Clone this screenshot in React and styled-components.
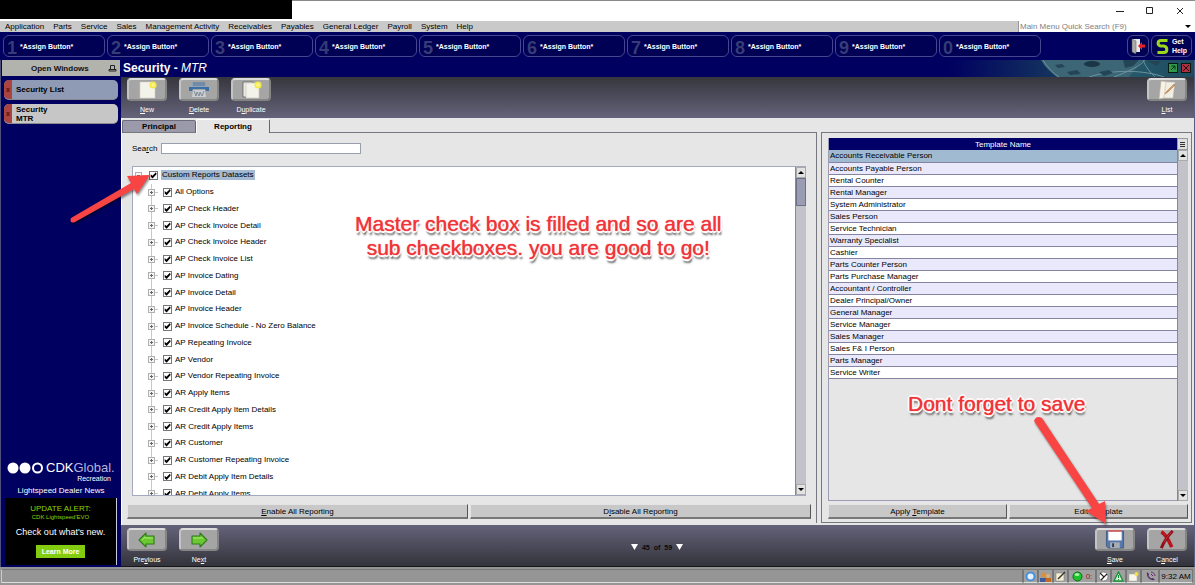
import React from 'react'
import styled, { createGlobalStyle } from 'styled-components'

const GlobalStyle = createGlobalStyle`
  * {
    box-sizing: border-box;
  }
  body {
    margin: 0;
    font-family: "Liberation Sans", Arial, sans-serif;
    font-size: 8px;
    color: #000;
  }
  button, input, select {
    font: inherit;
    color: inherit;
    padding: 0;
    margin: 0;
  }
  button {
    cursor: pointer;
  }
`

const Window = styled.div`
  position: relative;
  height: 100vh;
  display: flex;
  flex-direction: column;
  overflow: hidden;
  background: #000060;
`

const TitleBar = styled.header`
  height: 21px;
  flex: none;
  display: flex;
  justify-content: flex-end;
  background: #fff;
  border-top: 1px solid #8a8a8a;
  .redacted {
    width: 292px;
    height: 19px;
    margin: -1px auto 0 0;
    background: #000;
  }
  button {
    width: 30px;
    border: none;
    background: none;
    display: flex;
    align-items: center;
    justify-content: center;
  }
`

const MenuBar = styled.nav`
  height: 11px;
  flex: none;
  display: flex;
  align-items: stretch;
  gap: 9px;
  padding-left: 5px;
  background: #c9c9c9;
  line-height: 11px;
  button {
    border: none;
    background: none;
    white-space: nowrap;
  }
`

const QuickSearch = styled.label`
  position: relative;
  width: 177px;
  margin-left: auto;
  background: #fff;
  border-left: 1px solid #999;
  select {
    appearance: none;
    display: block;
    width: 100%;
    height: 11px;
    padding-left: 1px;
    border: none;
    background: transparent;
    color: #808080;
    line-height: 11px;
  }
  svg {
    position: absolute;
    right: 4px;
    top: 4px;
  }
`

const ShortcutBar = styled.div`
  height: 28px;
  flex: none;
  display: flex;
  align-items: center;
  gap: 2px;
  padding: 0 3px;
  background: #000060;
`

const Shortcut = styled.button`
  flex: 0 1 ${({ $width }) => $width || 102}px;
  height: 22px;
  display: flex;
  align-items: center;
  justify-content: ${({ $width }) => ($width ? 'center' : 'flex-start')};
  gap: 3px;
  padding-left: ${({ $width }) => ($width ? 0 : 3)}px;
  border: 1px solid #46468e;
  border-radius: 6px;
  background: #000054;
  color: #fff;
  font-size: 7px;
  font-weight: bold;
  line-height: 9px;
  white-space: nowrap;
  text-align: left;
  margin-left: ${({ $push }) => ($push ? 'auto' : 0)};
  b {
    color: #353c78;
    font-size: 18px;
    line-height: 22px;
    padding-top: 3px;
  }
`

const Body = styled.div`
  flex: 1;
  min-height: 0;
  display: flex;
`

const Sidebar = styled.aside`
  width: 121px;
  flex: none;
  display: flex;
  flex-direction: column;
  padding: 0 1px;
  background: #000060;
  color: #fff;
  border-left: 1px solid #50507c;
  h2 {
    height: 16px;
    margin: 0 0 4px;
    padding: 0 3px 0 29px;
    display: flex;
    align-items: center;
    justify-content: space-between;
    background: #b3b3ae;
    color: #111;
    font-size: 8px;
  }
`

const OpenWindow = styled.div`
  height: 20px;
  margin: 0 2px 4px;
  display: flex;
  overflow: hidden;
  border-radius: 5px;
  border-bottom: 1px solid #8a8a90;
  background: ${({ $active }) => ($active ? '#c6c6c6' : '#8f9bb5')};
  color: #000;
  font-weight: bold;
  .close {
    width: 8px;
    border: none;
    background: #a94440;
    color: #50100e;
    font-size: 7px;
    font-weight: bold;
  }
  .name {
    flex: 1;
    padding-left: 4px;
    border: none;
    background: none;
    text-align: left;
    line-height: 9px;
  }
`

const Logo = styled.div`
  margin-top: auto;
  padding: 0 5px;
  display: flex;
  align-items: center;
  gap: 2px;
  font-size: 13px;
  line-height: 14px;
  span {
    color: #b4b4da;
  }
`

const LogoSub = styled.div`
  padding-right: 9px;
  text-align: right;
  font-size: 7px;
  line-height: 8px;
`

const NewsTitle = styled.div`
  padding: 3px 0;
  text-align: center;
  line-height: 9px;
`

const News = styled.section`
  height: 67px;
  margin: 0 3px 2px;
  display: flex;
  flex-direction: column;
  align-items: center;
  padding-top: 6px;
  background: #000;
  border-right: 1px solid #c8c8d8;
  line-height: 10px;
  h3 {
    margin: 0;
    color: #8fd400;
    font-size: 8px;
    font-weight: normal;
  }
  small {
    color: #8fd400;
    font-size: 6px;
    line-height: 7px;
  }
  p {
    margin: 6px 0 7px;
    font-size: 9px;
    line-height: 11px;
  }
  a {
    padding: 1px 6px;
    background: #84cc10;
    color: #fff;
    font-size: 7px;
    font-weight: bold;
    text-decoration: none;
    line-height: 11px;
  }
`

const Main = styled.main`
  flex: 1;
  min-width: 0;
  display: flex;
  flex-direction: column;
  border-right: 1px solid #5c5c80;
`

const PageTitle = styled.div`
  height: 17px;
  flex: none;
  display: flex;
  justify-content: space-between;
  background: #000060;
  color: #fff;
  h1 {
    margin: 0;
    padding-left: 2px;
    font-size: 12px;
    line-height: 17px;
  }
  em {
    font-weight: normal;
  }
`

const Globe = styled.div`
  position: relative;
  display: flex;
  .controls {
    position: absolute;
    right: 3px;
    top: 3px;
    display: flex;
    gap: 3px;
  }
  button {
    width: 10px;
    height: 10px;
    display: flex;
    border: 1px solid #061a10;
    background: #2f9a4a;
  }
  button + button {
    background: #b03040;
  }
`

const Toolbar = styled.div`
  height: ${({ $bottom }) => ($bottom ? 42 : 41)}px;
  flex: none;
  display: flex;
  gap: 12px;
  padding: ${({ $bottom }) => ($bottom ? '3px 7px 0 6px' : '1px 7px 0 6px')};
  background: ${({ $bottom }) =>
    $bottom
      ? 'linear-gradient(#65637a, #33333b)'
      : 'linear-gradient(#36363d, #65637a)'};
  border-bottom: ${({ $bottom }) => ($bottom ? '1px solid #16161a' : 'none')};
`

const Tool = styled.button`
  width: 40px;
  flex: none;
  display: flex;
  flex-direction: column;
  align-items: center;
  border: none;
  background: none;
  color: #fff;
  font-size: 7px;
  line-height: 9px;
  margin-left: ${({ $push }) => ($push ? 'auto' : 0)};
  .face {
    width: 40px;
    height: 23px;
    margin-bottom: 4px;
    display: flex;
    align-items: center;
    justify-content: center;
    border: 2px solid;
    border-color: #dcdcdc #858585 #858585 #c4c4c4;
    border-radius: 4px;
    background: #a5a5a5;
  }
`

const Pager = styled.div`
  flex: 1;
  display: flex;
  align-items: center;
  justify-content: center;
  gap: 4px;
  color: #08080c;
  font-size: 7px;
  font-weight: bold;
`

const Content = styled.div`
  flex: 1;
  min-height: 0;
  display: grid;
  grid-template-columns: minmax(0, 695fr) minmax(0, 371fr);
  grid-template-rows: minmax(0, 1fr);
  gap: 4px;
  padding: 1px 2px 2px 0;
  background: #e6e6e6;
  border-left: 1px solid #fff;
`

const TabArea = styled.section`
  display: flex;
  flex-direction: column;
`

const Tabs = styled.div`
  height: 13px;
  flex: none;
  display: flex;
  align-items: flex-end;
`

const Tab = styled.button`
  width: 74px;
  height: ${({ $active }) => ($active ? 14 : 12)}px;
  margin-bottom: ${({ $active }) => ($active ? -1 : 0)}px;
  position: relative;
  border: 1px solid ${({ $active }) => ($active ? '#fff' : '#6c6c7c')};
  border-right-color: #66666e;
  border-bottom: none;
  border-radius: 2px 2px 0 0;
  background: ${({ $active }) => ($active ? '#e6e6e6' : '#9a9aab')};
  font-weight: bold;
  line-height: 11px;
`

const TabPanel = styled.div`
  flex: 1;
  min-height: 0;
  display: flex;
  flex-direction: column;
  padding: 10px 5px 4px;
  border-top: 1px solid #77777f;
  border-right: 1px solid #77777f;
`

const SearchField = styled.label`
  height: 11px;
  margin-bottom: 12px;
  padding-left: 5px;
  display: flex;
  align-items: center;
  gap: 4px;
  input {
    width: 200px;
    height: 11px;
    padding: 0 2px;
    border: 1px solid #9a9fb0;
    background: #fff;
    outline: none;
  }
`

const TreeBox = styled.div`
  flex: 1;
  min-height: 0;
  margin: 0 5px 8px;
  display: flex;
  border: 1px solid #a4a8bc;
  border-right: none;
`

const TreeView = styled.div`
  flex: 1;
  display: flex;
  flex-direction: column;
  overflow: hidden;
  background: #fff;
`

const Tree = styled.ul`
  flex: none;
  height: calc(100% + 7px);
  margin: 0;
  padding: 0;
  display: grid;
  grid-auto-rows: 1fr;
  list-style: none;
`

const Node = styled.li`
  display: flex;
  align-items: center;
  padding-left: ${({ $root }) => ($root ? 2 : 15)}px;
  background: ${({ $root }) =>
    $root ? 'none' : 'linear-gradient(#c8c8c8, #c8c8c8) 18px 0 / 1px 100% no-repeat'};
  .toggle {
    width: 7px;
    height: 7px;
    display: flex;
    border: 1px solid #b0b0b0;
    background: #f4f4f4;
  }
  .branch {
    width: ${({ $root }) => ($root ? 7 : 3)}px;
    margin-right: ${({ $root }) => ($root ? 0 : 5)}px;
    border-top: 1px solid #c8c8c8;
  }
  label {
    display: flex;
    align-items: center;
    gap: ${({ $root }) => ($root ? 3 : 2)}px;
    line-height: 10px;
    white-space: nowrap;
  }
  label span {
    padding: 0 1px;
    background: ${({ $root }) => ($root ? '#a3bad2' : 'none')};
  }
`

const CheckBox = styled.input`
  appearance: none;
  width: 9px;
  height: 9px;
  flex: none;
  display: grid;
  place-items: center;
  border: 1px solid #777;
  background: #fff;
  &:checked::before {
    content: "";
    width: 7px;
    height: 7px;
    background: #000;
    clip-path: polygon(10% 35%, 35% 55%, 85% 5%, 95% 30%, 38% 95%, 10% 70%);
  }
`

const ScrollBar = styled.div`
  width: 11px;
  flex: none;
  display: flex;
  flex-direction: column;
  background: #c2c2c8;
  border-left: 1px solid #888894;
  button {
    height: 11px;
    display: flex;
    align-items: center;
    justify-content: center;
    border: 1px solid #aaa;
    background: #e2e2e2;
  }
  button:last-child {
    margin-top: auto;
  }
  .thumb {
    height: 28px;
    background: #9a9cb2;
    border: 1px solid #6e7088;
  }
`

const ButtonRow = styled.div`
  height: 15px;
  flex: none;
  display: flex;
  gap: 2px;
`

const PushButton = styled.button`
  flex: 1;
  border: 1px solid;
  border-color: #e4e4e4 #555 #777 #e4e4e4;
  border-bottom-width: 2px;
  background: #c8c8c8;
`

const Templates = styled.section`
  display: flex;
  flex-direction: column;
  margin-top: 13px;
  padding: 5px 3px 3px 6px;
  border: 1px solid #77777f;
`

const TemplateList = styled.div`
  flex: 1;
  min-height: 0;
  display: flex;
  margin-bottom: 3px;
  .pane {
    flex: 1;
    border: 1px solid #9c9cb4;
    border-right: none;
    border-top: none;
  }
  .side {
    display: flex;
    flex-direction: column;
  }
  .side > button {
    height: 12px;
    display: flex;
    align-items: center;
    justify-content: center;
    border: 1px solid #999;
    background: #dedede;
  }
  .side > div {
    flex: 1;
  }
`

const Table = styled.table`
  width: 100%;
  border-collapse: collapse;
  line-height: 11px;
  th {
    height: 12px;
    padding: 0;
    background: #000068;
    color: #fff;
    font-weight: normal;
  }
  td {
    height: 12px;
    padding: 0 1px;
    background: #fff;
    border-bottom: 1px solid #8484a2;
  }
  tr:nth-child(even) td {
    background: #e9e9fb;
  }
  tbody tr:first-child td {
    background: #a0bad2;
  }
`

const StatusBar = styled.footer`
  height: 18px;
  flex: none;
  display: flex;
  justify-content: flex-end;
  padding: 2px 2px 2px 1px;
  background: #959595;
  .message {
    flex: 1;
    border: 1px solid #777;
    border-bottom-color: #ddd;
    border-left-color: #ccc;
  }
`

const StatusCell = styled.div`
  width: ${({ $width }) => $width || 15}px;
  display: flex;
  align-items: center;
  justify-content: center;
  gap: 3px;
  border: 1px solid #777;
  border-bottom-color: #ddd;
  background: #a0a0a0;
  white-space: nowrap;
  .count {
    color: #a02020;
  }
`

const Note = styled.p`
  position: absolute;
  left: ${({ $x }) => $x}px;
  top: ${({ $y }) => $y}px;
  margin: 0;
  color: #f03439;
  font-size: 21px;
  line-height: 24px;
  text-align: center;
  white-space: nowrap;
  pointer-events: none;
  text-shadow: 0 0 1px #f03439, 2px 0 #fff, -2px 0 #fff, 0 2px #fff, 0 -2px #fff,
    1px 1px #fff, -1px -1px #fff, 1px -1px #fff, -1px 1px #fff, 1px 4px 2px #555;
`

const Arrow = styled.svg`
  position: absolute;
  left: ${({ $x }) => $x}px;
  top: ${({ $y }) => $y}px;
  pointer-events: none;
  filter: drop-shadow(1px 2px 1px rgba(0, 0, 0, 0.45));
`

const menus = ['Application', 'Parts', 'Service', 'Sales', 'Management Activity', 'Receivables', 'Payables', 'General Ledger', 'Payroll', 'System', 'Help']

const shortcuts = [1, 2, 3, 4, 5, 6, 7, 8, 9, 0]

const datasets = [
  'All Options',
  'AP Check Header',
  'AP Check Invoice Detail',
  'AP Check Invoice Header',
  'AP Check Invoice List',
  'AP Invoice Dating',
  'AP Invoice Detail',
  'AP Invoice Header',
  'AP Invoice Schedule - No Zero Balance',
  'AP Repeating Invoice',
  'AP Vendor',
  'AP Vendor Repeating Invoice',
  'AR Apply Items',
  'AR Credit Apply Item Details',
  'AR Credit Apply Items',
  'AR Customer',
  'AR Customer Repeating Invoice',
  'AR Debit Apply Item Details',
  'AR Debit Apply Items',
]

const templates = [
  'Accounts Receivable Person',
  'Accounts Payable Person',
  'Rental Counter',
  'Rental Manager',
  'System Administrator',
  'Sales Person',
  'Service Technician',
  'Warranty Specialist',
  'Cashier',
  'Parts Counter Person',
  'Parts Purchase Manager',
  'Accountant / Controller',
  'Dealer Principal/Owner',
  'General Manager',
  'Service Manager',
  'Sales Manager',
  'Sales F& I Person',
  'Parts Manager',
  'Service Writer',
]

const Triangle = ({ up, color = '#000', size = 6 }) => (
  <svg width={size} height={size === 6 ? 3 : 6} viewBox="0 0 6 3" preserveAspectRatio="none">
    <path d={up ? 'M0 3L3 0L6 3Z' : 'M0 0H6L3 3Z'} fill={color} />
  </svg>
)

const Sparkle = ({ x }) => (
  <g>
    <circle cx={x} cy="4" r="3.6" fill="#f4e84a" />
    <circle cx={x} cy="4" r="1.8" fill="#fdf78c" />
  </g>
)

const NewIcon = () => (
  <svg width="20" height="18" viewBox="0 0 20 18">
    <path d="M3 1H15L18 4V17H3Z" fill="#f4f3ea" stroke="#d0cfc6" strokeWidth=".6" />
    <Sparkle x={16} />
  </svg>
)

const DuplicateIcon = () => (
  <svg width="22" height="18" viewBox="0 0 22 18">
    <path d="M3 1H13V16H3Z" fill="#eceadf" stroke="#555" strokeWidth=".7" />
    <path d="M6 2H19V17H6Z" fill="#f4f3ea" stroke="#c4c3ba" strokeWidth=".6" />
    <Sparkle x={18} />
  </svg>
)

const DeleteIcon = () => (
  <svg width="22" height="18" viewBox="0 0 22 18">
    <path d="M4 1H18V6H4Z" fill="#8ea4bc" />
    <path d="M5 2H17M5 4H17" stroke="#496785" strokeWidth=".8" />
    <path d="M1 6H21V10H18L17 8H5L4 10H1Z" fill="#3d6ea6" />
    <path d="M5 9H17L18 16H4Z" fill="#c9ced3" />
    <path d="M6 10L8 15L9 11L11 15L12 11L14 15L16 10" fill="none" stroke="#707b86" strokeWidth=".8" />
  </svg>
)

const ListIcon = () => (
  <svg width="20" height="20" viewBox="0 0 20 20">
    <path d="M4 1L12 2V17L2 19Z" fill="#f7f2e4" stroke="#b5ab94" strokeWidth=".5" />
    <path d="M9 2H18L16 18H7Z" fill="#f1eee6" stroke="#b9b3a5" strokeWidth=".5" />
    <path d="M17 4L9 12L8 14L11 12L18 5Z" fill="#dc9a58" stroke="#8b623a" strokeWidth=".4" />
  </svg>
)

const ArrowIcon = ({ left }) => (
  <svg width="18" height="16" viewBox="0 0 18 16">
    <path
      d={left ? 'M1 8L8 1V4H16V12H8V15Z' : 'M17 8L10 1V4H2V12H10V15Z'}
      fill="#6cc832"
      stroke="#2c7c18"
      strokeWidth="1.1"
      strokeLinejoin="round"
    />
    <path d={left ? 'M4 8L7 5V6H15' : 'M3 6H11V5L13 7'} fill="none" stroke="#a6ea70" />
  </svg>
)

const SaveIcon = () => (
  <svg width="20" height="19" viewBox="0 0 20 20">
    <path d="M1 1H19V19H3L1 17Z" fill="#5878ac" stroke="#34507c" strokeWidth=".8" />
    <path d="M3 1H17V11H3Z" fill="#fff" />
    <path d="M3 0H17V2H3Z" fill="#c86464" />
    <path d="M5 13H15V19H5Z" fill="#a7adb5" />
    <path d="M7 14H9V18H7Z" fill="#303a50" />
  </svg>
)

const CancelIcon = () => (
  <svg width="18" height="19" viewBox="0 0 18 20">
    <path d="M3 2C7 4 11 11 14 18" fill="none" stroke="#b8141c" strokeWidth="3.8" />
    <path d="M15 1C11 5 6 12 3 19" fill="none" stroke="#8c1018" strokeWidth="3.2" />
    <path d="M14 2C11 5 8 9 6 13" fill="none" stroke="#d83038" strokeWidth="1" />
  </svg>
)

const ExitIcon = () => (
  <svg width="15" height="16" viewBox="0 0 15 16">
    <path d="M1 1H9V14H1Z" fill="#e8e8e8" />
    <path d="M1 1L5 3V16L1 14Z" fill="#aaa" stroke="#555" strokeWidth=".5" />
    <path d="M7 8L11 4V6.500H14V9.500H11V12Z" fill="#e4202c" />
  </svg>
)

const HelpIcon = () => (
  <svg width="13" height="17" viewBox="0 0 13 17">
    <path
      d="M11.500 2.500H5C1.500 2.500 1 7 4.500 8H8C12 9 11.500 14.500 8 14.500H1.500"
      fill="none"
      stroke="#9ad71c"
      strokeWidth="3"
    />
  </svg>
)

const WorldArt = () => (
  <svg width="245" height="17" viewBox="0 0 245 17">
    <defs>
      <linearGradient id="sea" x1="0" x2="1">
        <stop offset="0" stopColor="#000060" />
        <stop offset=".4" stopColor="#12305e" />
        <stop offset=".75" stopColor="#25586a" />
        <stop offset="1" stopColor="#1d4a60" />
      </linearGradient>
    </defs>
    <rect width="245" height="17" fill="url(#sea)" />
    <path d="M92 0C96 7 101 12 108 17H180L194 0Z" fill="#3c6676" />
    <path d="M94 0C98 7 104 13 110 17M165 17C180 11 192 6 196 0M194 0C197 8 202 13 206 17M140 17C165 9 195 10 215 17" fill="none" stroke="#6c93a0" />
    <ellipse cx="143" cy="4" rx="8" ry="3" fill="#1b3546" />
    <path d="M106 5L113 4L116 7L109 8ZM118 12L128 10L132 14L121 15ZM150 12L160 10L164 13L155 16ZM174 0H190L184 6L176 8ZM198 1H212L208 6Z" fill="#244556" />
  </svg>
)

const App = () => {
  return (
    <Window>
      <GlobalStyle />
      <TitleBar>
        <div className="redacted" />
        <button aria-label="Minimize">
          <svg width="8" height="8"><path d="M0 4.500H8" stroke="#222" /></svg>
        </button>
        <button aria-label="Maximize">
          <svg width="8" height="8"><path d="M.5.500H6.500V6.500H.5Z" fill="none" stroke="#222" /></svg>
        </button>
        <button aria-label="Close">
          <svg width="8" height="8"><path d="M1 1L7 7M7 1L1 7" stroke="#222" /></svg>
        </button>
      </TitleBar>
      <MenuBar>
        {menus.map((menu) => <button key={menu}>{menu}</button>)}
        <QuickSearch>
          <select aria-label="Main Menu Quick Search">
            <option>Main Menu Quick Search (F9)</option>
          </select>
          <Triangle />
        </QuickSearch>
      </MenuBar>
      <ShortcutBar>
        {shortcuts.map((n) => (
          <Shortcut key={n}><b>{n}</b>*Assign Button*</Shortcut>
        ))}
        <Shortcut $width={22} $push aria-label="Exit"><ExitIcon /></Shortcut>
        <Shortcut $width={41}><HelpIcon /><span>Get<br />Help</span></Shortcut>
      </ShortcutBar>

      <Body>
        <Sidebar>
          <h2>
            Open Windows
            <svg width="9" height="8" viewBox="0 0 9 8">
              <path d="M2.500 5V1.500H6.500V5M1 5.500H8V7H1Z" fill="none" stroke="#222" />
            </svg>
          </h2>
          <OpenWindow>
            <button className="close">x</button>
            <button className="name">Security List</button>
          </OpenWindow>
          <OpenWindow $active>
            <button className="close">x</button>
            <button className="name">Security<br />MTR</button>
          </OpenWindow>
          <Logo>
            <svg width="37" height="12" viewBox="0 0 37 12">
              <circle cx="6" cy="6" r="5.500" fill="#fff" />
              <circle cx="18" cy="6" r="5.500" fill="#fff" />
              <circle cx="30.500" cy="6" r="4.500" fill="none" stroke="#fff" strokeWidth="2" />
            </svg>
            <div>CDK<span>Global.</span></div>
          </Logo>
          <LogoSub>Recreation</LogoSub>
          <NewsTitle>Lightspeed Dealer News</NewsTitle>
          <News>
            <h3>UPDATE ALERT:</h3>
            <small>CDK Lightspeed'EVO</small>
            <p>Check out what's new.</p>
            <a href="#news">Learn More</a>
          </News>
        </Sidebar>

        <Main>
          <PageTitle>
            <h1>Security - <em>MTR</em></h1>
            <Globe>
              <WorldArt />
              <div className="controls">
                <button aria-label="Restore">
                  <svg width="8" height="8"><path d="M2 6L6 2M2.500 2H6V5.500" stroke="#0b2c14" fill="none" /></svg>
                </button>
                <button aria-label="Close page">
                  <svg width="8" height="8"><path d="M1 1L7 7M7 1L1 7" stroke="#2c060c" /></svg>
                </button>
              </div>
            </Globe>
          </PageTitle>
          <Toolbar>
            <Tool><span className="face"><NewIcon /></span><span><u>N</u>ew</span></Tool>
            <Tool><span className="face"><DeleteIcon /></span><span><u>D</u>elete</span></Tool>
            <Tool><span className="face"><DuplicateIcon /></span><span>D<u>u</u>plicate</span></Tool>
            <Tool $push><span className="face"><ListIcon /></span><span><u>L</u>ist</span></Tool>
          </Toolbar>

          <Content>
            <TabArea>
              <Tabs>
                <Tab>Principal</Tab>
                <Tab $active>Reporting</Tab>
              </Tabs>
              <TabPanel>
                <SearchField>
                  <span>Sea<u>r</u>ch</span>
                  <input type="text" />
                </SearchField>
                <TreeBox>
                  <TreeView>
                    <Tree>
                      <Node $root>
                        <span className="toggle">
                          <svg width="5" height="5"><path d="M1 2.500H4" stroke="#666" /></svg>
                        </span>
                        <span className="branch" />
                        <label><CheckBox type="checkbox" defaultChecked /><span>Custom Reports Datasets</span></label>
                      </Node>
                      {datasets.map((name) => (
                        <Node key={name}>
                          <span className="toggle">
                            <svg width="5" height="5"><path d="M1 2.500H4M2.500 1V4" stroke="#666" /></svg>
                          </span>
                          <span className="branch" />
                          <label><CheckBox type="checkbox" defaultChecked /><span>{name}</span></label>
                        </Node>
                      ))}
                    </Tree>
                  </TreeView>
                  <ScrollBar>
                    <button aria-label="Scroll up"><Triangle up /></button>
                    <div className="thumb" />
                    <button aria-label="Scroll down"><Triangle /></button>
                  </ScrollBar>
                </TreeBox>
                <ButtonRow>
                  <PushButton><u>E</u>nable All Reporting</PushButton>
                  <PushButton>D<u>i</u>sable All Reporting</PushButton>
                </ButtonRow>
              </TabPanel>
            </TabArea>

            <Templates>
              <TemplateList>
                <div className="pane">
                  <Table>
                    <thead>
                      <tr><th>Template Name</th></tr>
                    </thead>
                    <tbody>
                      {templates.map((name) => (
                        <tr key={name}><td>{name}</td></tr>
                      ))}
                    </tbody>
                  </Table>
                </div>
                <div className="side">
                  <button aria-label="Columns">
                    <svg width="5" height="5"><path d="M0 .5H5M0 2.500H5M0 4.500H5" stroke="#333" /></svg>
                  </button>
                  <ScrollBar>
                    <button aria-label="Scroll templates up"><Triangle up /></button>
                    <button aria-label="Scroll templates down"><Triangle /></button>
                  </ScrollBar>
                </div>
              </TemplateList>
              <ButtonRow>
                <PushButton>Apply <u>T</u>emplate</PushButton>
                <PushButton>Edit Te<u>m</u>plate</PushButton>
              </ButtonRow>
            </Templates>
          </Content>

          <Toolbar $bottom>
            <Tool><span className="face"><ArrowIcon left /></span><span>Pre<u>v</u>ious</span></Tool>
            <Tool><span className="face"><ArrowIcon /></span><span>Ne<u>x</u>t</span></Tool>
            <Pager>
              <Triangle color="#fff" size={7} />
              <span>45</span><span>of</span><span>59</span>
              <Triangle color="#fff" size={7} />
            </Pager>
            <Tool><span className="face"><SaveIcon /></span><span><u>S</u>ave</span></Tool>
            <Tool><span className="face"><CancelIcon /></span><span>C<u>a</u>ncel</span></Tool>
          </Toolbar>
        </Main>
      </Body>

      <StatusBar>
        <div className="message" />
        <StatusCell>
          <svg width="11" height="11"><circle cx="5.500" cy="5.500" r="4" fill="#e4f2ff" stroke="#4a90d8" strokeWidth="2" /></svg>
        </StatusCell>
        <StatusCell>
          <svg width="13" height="11">
            <circle cx="5" cy="4" r="2.500" fill="#d89040" /><path d="M1 11V7H8V11Z" fill="#3c5a9c" />
            <circle cx="9" cy="5" r="2" fill="#e0b070" /><path d="M6 11L7 7H12V11Z" fill="#c46a20" />
          </svg>
        </StatusCell>
        <StatusCell>
          <svg width="11" height="11"><path d="M1 2H9V10H1Z" fill="#f4efd4" stroke="#777" strokeWidth=".5" /><path d="M3 8L10 1" stroke="#3c3020" strokeWidth="1.500" /></svg>
        </StatusCell>
        <StatusCell $width={28}>
          <svg width="11" height="11"><circle cx="5.500" cy="5.500" r="4.500" fill="#1cc42c" stroke="#0c6c14" /><ellipse cx="5" cy="3.500" rx="2.500" ry="1.500" fill="#a4f4a4" /></svg>
          <span className="count">0:</span>
        </StatusCell>
        <StatusCell>
          <svg width="11" height="11"><circle cx="5.500" cy="5.500" r="4.500" fill="#fff" stroke="#888" /><path d="M2 2L6 6L9 3M6 6L3 9" fill="none" stroke="#222" strokeWidth="1.200" /></svg>
        </StatusCell>
        <StatusCell>
          <svg width="11" height="11"><path d="M5.500 1L10 10H1Z" fill="#d8f4d8" stroke="#149034" strokeWidth="1.300" /><path d="M5.500 4V7M5.500 8V9" stroke="#149034" /></svg>
        </StatusCell>
        <StatusCell>
          <svg width="11" height="11"><path d="M1 3H9V10H1Z" fill="#f8f6ea" stroke="#aaa" strokeWidth=".5" /><circle cx="8.500" cy="3" r="2" fill="#f0e040" /></svg>
        </StatusCell>
        <StatusCell $width={18}>
          <svg width="11" height="11"><path d="M2 1C1 6 5 10 10 9L8 7L6 7.500L3.500 5L4 3Z" fill="#5c2c6c" /><path d="M6 1C8 1 10 3 10 5M6 3L8 5" fill="none" stroke="#5c2c6c" /></svg>
        </StatusCell>
        <StatusCell $width={34}>9:32 AM</StatusCell>
      </StatusBar>

      <Note $x={355} $y={212}>
        Master check box is filled and so are all<br />sub checkboxes. you are good to go!
      </Note>
      <Note $x={908} $y={392}>Dont forget to save</Note>
      <Arrow $x={66} $y={168} width="90" height="60">
        <path d="M5 50L65 15L61 8L84 7L71 26L68 21L9 54Q3 56 5 50Z" fill="#f94444" />
      </Arrow>
      <Arrow $x={1028} $y={412} width="90" height="120">
        <path d="M6 9Q8 3 14 6L71 92L77 89L78 112L58 99L64 96Z" fill="#f94444" />
      </Arrow>
    </Window>
  )
}

export default App
